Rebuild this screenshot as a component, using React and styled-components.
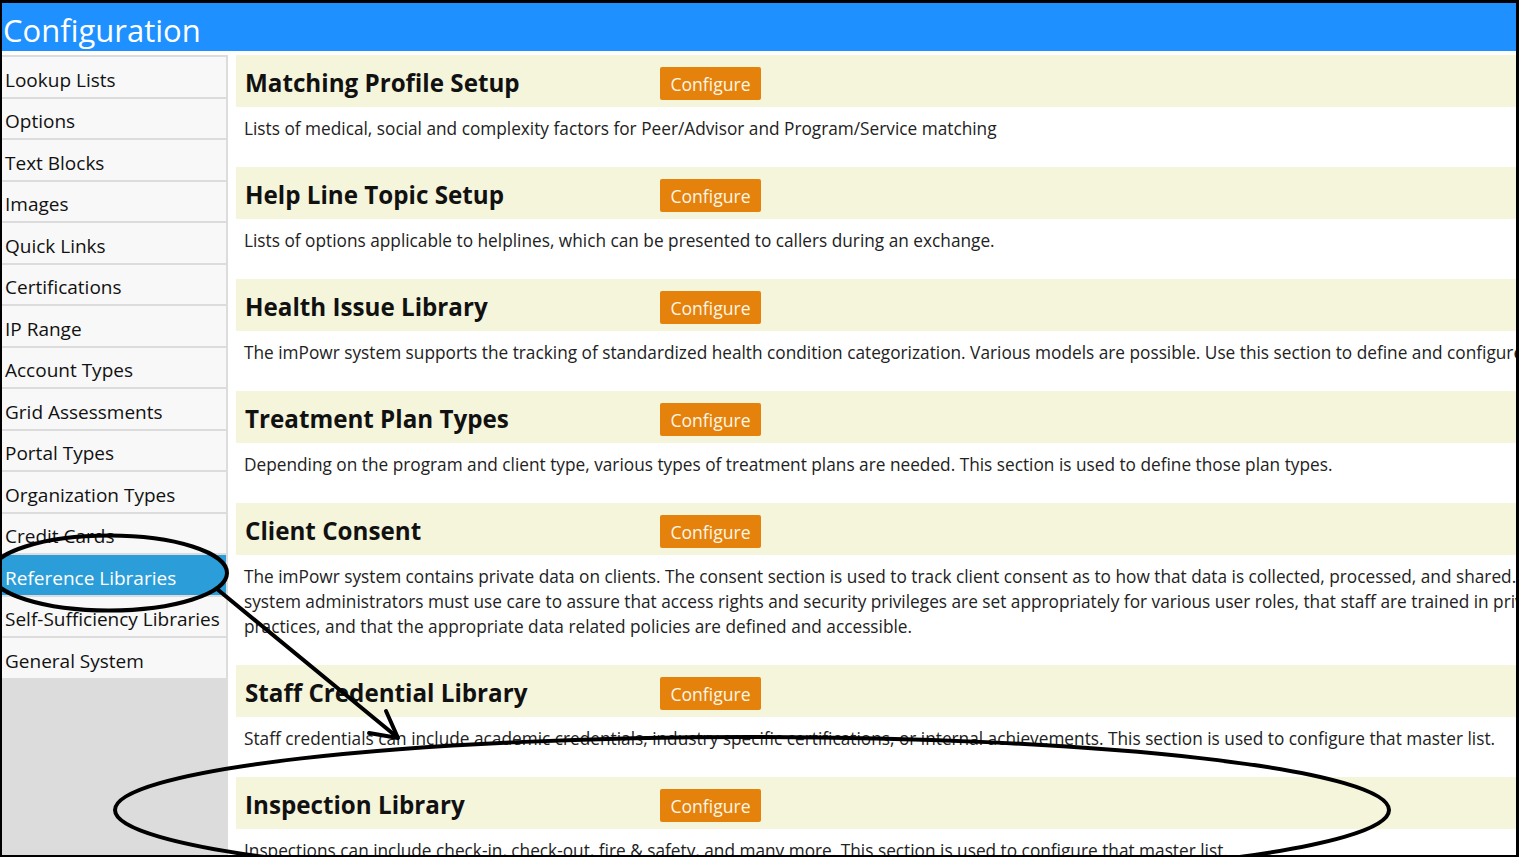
import styled, { createGlobalStyle } from 'styled-components';

const GlobalStyle = createGlobalStyle`
  html, body {
    margin: 0;
    padding: 0;
    background: #fff;
  }
  * {
    box-sizing: border-box;
  }
`;

const menu = [
    'Lookup Lists',
    'Options',
    'Text Blocks',
    'Images',
    'Quick Links',
    'Certifications',
    'IP Range',
    'Account Types',
    'Grid Assessments',
    'Portal Types',
    'Organization Types',
    'Credit Cards',
    'Reference Libraries',
    'Self-Sufficiency Libraries',
    'General System',
];

const sections = [
    {
        title: 'Matching Profile Setup',
        lines: ['Lists of medical, social and complexity factors for Peer/Advisor and Program/Service matching'],
    },
    {
        title: 'Help Line Topic Setup',
        lines: ['Lists of options applicable to helplines, which can be presented to callers during an exchange.'],
    },
    {
        title: 'Health Issue Library',
        lines: ['The imPowr system supports the tracking of standardized health condition categorization. Various models are possible. Use this section to define and configure them.'],
    },
    {
        title: 'Treatment Plan Types',
        lines: ['Depending on the program and client type, various types of treatment plans are needed. This section is used to define those plan types.'],
    },
    {
        title: 'Client Consent',
        lines: [
            'The imPowr system contains private data on clients. The consent section is used to track client consent as to how that data is collected, processed, and shared.',
            'system administrators must use care to assure that access rights and security privileges are set appropriately for various user roles, that staff are trained in privacy',
            'practices, and that the appropriate data related policies are defined and accessible.',
        ],
    },
    {
        title: 'Staff Credential Library',
        lines: ['Staff credentials can include academic credentials, industry specific certifications, or internal achievements. This section is used to configure that master list.'],
    },
    {
        title: 'Inspection Library',
        lines: ['Inspections can include check-in, check-out, fire & safety, and many more. This section is used to configure that master list.'],
    },
];

export default function App() {
    return (
        <Frame>
            <GlobalStyle />
            <TopBar>Configuration</TopBar>
            <Body>
                <Sidebar>
                    {menu.map((label) => (
                        <MenuItem key={label} active={label === 'Reference Libraries'}>
                            {label}
                        </MenuItem>
                    ))}
                </Sidebar>
                <Main>
                    {sections.map((s) => (
                        <Section key={s.title}>
                            <SectionHead>
                                <SectionTitle>{s.title}</SectionTitle>
                                <ConfigureButton>Configure</ConfigureButton>
                            </SectionHead>
                            <Desc>
                                {s.lines.map((line, i) => (
                                    <DescLine key={i}>{line}</DescLine>
                                ))}
                            </Desc>
                        </Section>
                    ))}
                </Main>
            </Body>
            {/* hand-drawn circles and arrow over the page */}
            <Markup viewBox="0 0 1519 857">
                <ellipse cx="109" cy="573" rx="118" ry="37.5" />
                <polyline points="217,589 397,737" />
                <polyline points="386,711 398,738 369,733" />
                <ellipse cx="752" cy="810" rx="637" ry="73" />
            </Markup>
        </Frame>
    );
}

const Frame = styled.div`
    position: relative;
    width: 1519px;
    height: 857px;
    overflow: hidden;
    border: 2px solid #000;
    border-top-width: 3px;
    border-right-width: 3px;
    background: #fff;
    font-family: "Open Sans", "Noto Sans", sans-serif;
    color: #111;
`;

const TopBar = styled.div`
    height: 48px;
    background: #1e90ff;
    color: #fff;
    font-size: 31px;
    line-height: 55px;
    padding-left: 1px;
    margin-bottom: 4px;
    white-space: nowrap;
    overflow: hidden;
`;

const Body = styled.div`
    display: flex;
    height: calc(100% - 52px);
`;

const Sidebar = styled.div`
    flex: 0 0 226px;
    display: flex;
    flex-direction: column;
    gap: 2px;
    padding: 2px 2px 0 0;
    background: #dcdcdc;
`;

const MenuItem = styled.div`
    height: 39.5px;
    display: flex;
    align-items: center;
    padding: 6px 0 0 3px;
    font-size: 19px;
    white-space: nowrap;
    background: ${(p) => (p.active ? '#2b9ed9' : '#f8f8f8')};
    color: ${(p) => (p.active ? '#fff' : '#111')};
`;

const Main = styled.div`
    flex: 1;
    min-width: 0;
    margin-left: 8px;
    overflow: hidden;
`;

const Section = styled.div``;

const SectionHead = styled.div`
    height: 52px;
    display: flex;
    align-items: center;
    padding-left: 9px;
    background: #f5f5dc;
`;

const SectionTitle = styled.h2`
    flex: 0 0 415px;
    margin: 2px 0 0;
    font-size: 24.2px;
    font-weight: 700;
    color: #111;
    white-space: nowrap;
`;

const ConfigureButton = styled.button`
    width: 101px;
    height: 32.5px;
    margin-top: 5px;
    padding: 0;
    border: none;
    border-radius: 2px;
    background: #e4820b;
    color: #fdf6e8;
    font-family: inherit;
    font-size: 17.6px;
    cursor: pointer;
`;

const Desc = styled.div`
    padding: 9px 8px 26px;
    font-size: 17.25px;
    line-height: 25px;
    color: #222;
`;

const DescLine = styled.div`
    white-space: nowrap;
`;

const Markup = styled.svg`
    position: absolute;
    left: -2px;
    top: -3px;
    width: 1519px;
    height: 857px;
    pointer-events: none;
    fill: none;
    stroke: #000;
    stroke-width: 4px;
    stroke-linecap: round;
    stroke-linejoin: round;
`;
